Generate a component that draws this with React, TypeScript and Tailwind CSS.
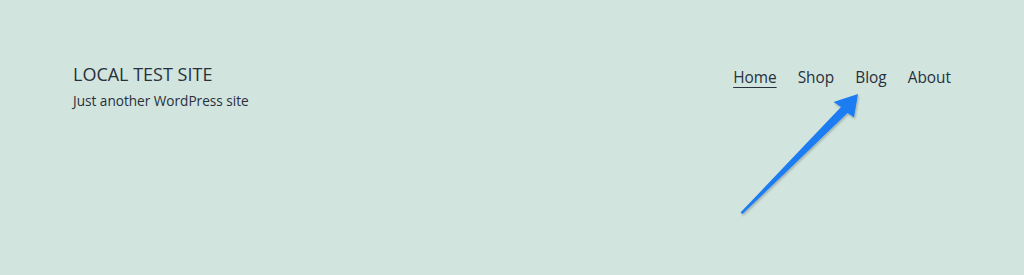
import React from 'react';

const navItems = ['Home', 'Shop', 'Blog', 'About'];

function Arrow() {
  return (
    <svg
      className="absolute left-0 top-0 pointer-events-none"
      width="1024"
      height="275"
      viewBox="0 0 1024 275">
      <defs>
        <filter id="shadow" x="-20%" y="-20%" width="140%" height="140%">
          <feDropShadow dx="1" dy="1.5" stdDeviation="1.2" floodColor="#000" floodOpacity="0.25" />
        </filter>
      </defs>
      <path
        d="M740.5 212.5 L841 107 L833.5 102 L858 94 L854 117.5 L847.5 113 L742.5 214 Z"
        fill="#1e7cf2"
        filter="url(#shadow)" />
    </svg>
  );
}

export default function App() {
  return (
    <div className="relative w-[1024px] h-[275px] bg-[#d1e4dd] text-[#28303d] font-['Open_Sans',sans-serif] overflow-hidden">
      <header className="flex justify-between items-start px-[73px] pt-[62px]">
        <div>
          <div className="text-[18px] leading-[24px]">LOCAL TEST SITE</div>
          <div className="text-[13.6px] leading-[20px] mt-[5px]">Just another WordPress site</div>
        </div>
        <nav className="flex gap-[21px] text-[15.4px] leading-[24px] pt-[4px]">
          {navItems.map((item, i) => (
            <a
              key={item}
              className={i === 0 ? 'underline underline-offset-[4px] decoration-1' : ''}>
              {item}
            </a>
          ))}
        </nav>
      </header>
      <Arrow />
    </div>
  );
}
